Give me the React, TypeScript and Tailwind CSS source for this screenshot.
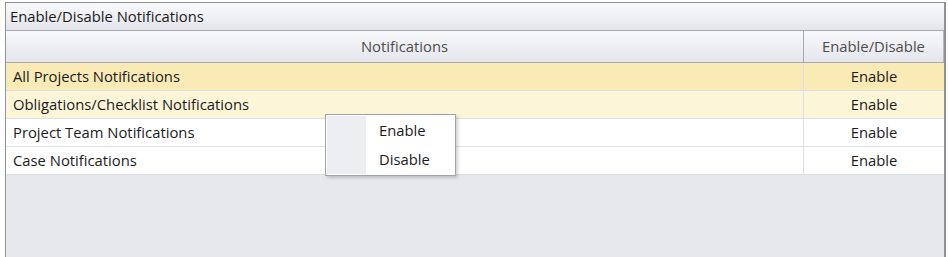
import { useState } from 'react'

type Row = { id: number; name: string; value: string }

const rows: Row[] = [
  { id: 1, name: 'All Projects Notifications', value: 'Enable' },
  { id: 2, name: 'Obligations/Checklist Notifications', value: 'Enable' },
  { id: 3, name: 'Project Team Notifications', value: 'Enable' },
  { id: 4, name: 'Case Notifications', value: 'Enable' },
]

export default function App() {
  const [selected] = useState(1)
  const [hovered] = useState(2)

  return (
    <div className="relative w-[948px] h-[257px] overflow-hidden bg-white text-[14.8px] text-[#1b1b1b] [font-family:'Open_Sans','Noto_Sans',sans-serif]">
      <div className="ml-[5px] mt-[2px] w-[941px] h-[270px] border border-[#8f9398] border-r-2 bg-[#e6e8ec] flex flex-col">
        {/* title */}
        <div className="h-[28px] flex items-center pl-[4px] border-b border-[#a7abb1] bg-gradient-to-b from-[#f9fafc] to-[#e3e5eb]">
          Enable/Disable Notifications
        </div>

        {/* header */}
        <div className="grid grid-cols-[1fr_140px] h-[32px] border-b border-[#a7abb1] bg-gradient-to-b from-[#f7f8fa] to-[#e4e6ec] text-[#4d4d4d]">
          <div className="flex items-center justify-center border-r border-[#a7abb1]">Notifications</div>
          <div className="flex items-center justify-center border-r border-[#b4b8be]">Enable/Disable</div>
        </div>

        {rows.map((row) => {
          const bg =
            row.id === selected ? 'bg-[#faebb6]' : row.id === hovered ? 'bg-[#fcf5d8]' : 'bg-white'
          return (
            <div
              key={row.id}
              className={`grid grid-cols-[1fr_140px] h-[28px] border-b border-[#dcdfe3] ${bg}`}
            >
              <div className="flex items-center pl-[7px] border-r border-[#dcdfe3]">{row.name}</div>
              <div className="flex items-center justify-center">{row.value}</div>
            </div>
          )
        })}
      </div>

      {/* context menu */}
      <div className="absolute left-[325px] top-[114px] w-[131px] h-[62px] border border-[#a0a4aa] bg-white p-[1px] flex shadow-[2px_2px_3px_rgba(0,0,0,0.18)]">
        <div className="w-[39px] bg-[#eceef2]" />
        <div className="flex-1 flex flex-col">
          <div className="h-[29px] flex items-center pl-[13px]">Enable</div>
          <div className="h-[29px] flex items-center pl-[13px]">Disable</div>
        </div>
      </div>
    </div>
  )
}
